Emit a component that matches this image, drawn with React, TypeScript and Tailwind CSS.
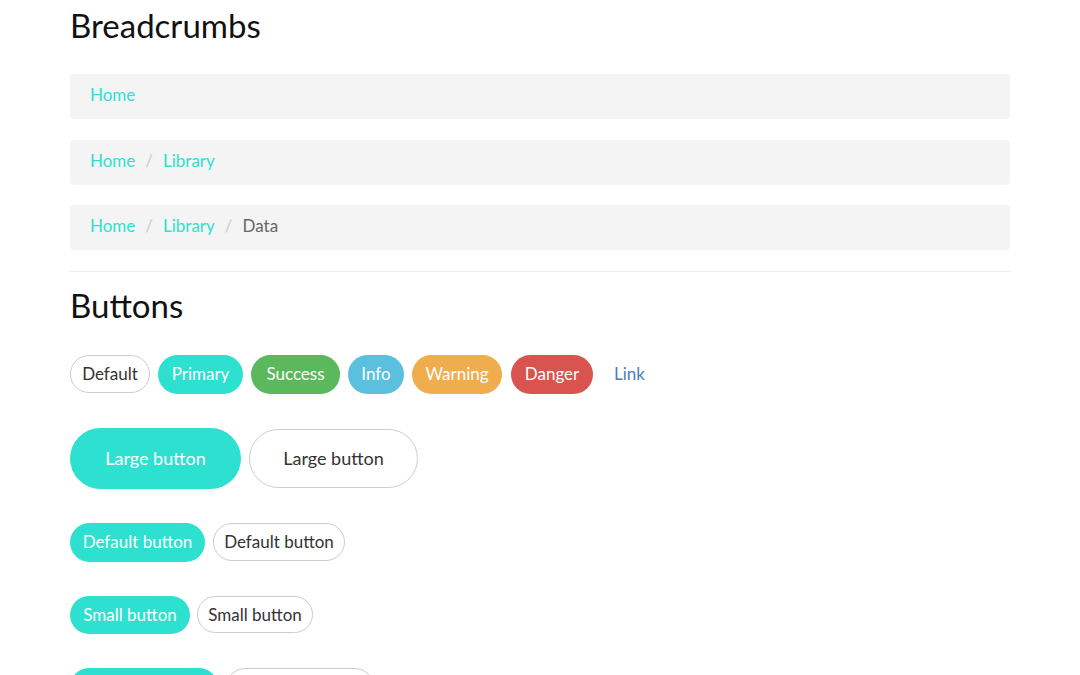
const font = { fontFamily: "Lato, 'Open Sans', sans-serif" };

function Crumbs({ items }: { items: string[] }) {
  return (
    <div className="flex h-[45px] items-center rounded-[4px] bg-[#f4f4f4] px-[20px] pb-[4px] text-[17px]">
      {items.map((item, i) => {
        const last = i === items.length - 1 && items.length > 2;
        return (
          <span key={item} className="flex items-center">
            {i > 0 && <span className="px-[10px] text-[#cccccc]">/</span>}
            <span className={last ? "text-[#666666]" : "text-[#2ee0cf]"}>{item}</span>
          </span>
        );
      })}
    </div>
  );
}

export default function App() {
  return (
    <div className="min-h-[675px] bg-white text-[#333333]" style={font}>
      <div className="mx-auto w-[940px] pt-[7px]">
        {/* Breadcrumbs */}
        <h2 className="mb-[31px] text-[33px] leading-[1.1] font-normal text-[#111111]">Breadcrumbs</h2>
        <div className="flex flex-col gap-[20.5px]">
          <Crumbs items={["Home"]} />
          <Crumbs items={["Home", "Library"]} />
          <Crumbs items={["Home", "Library", "Data"]} />
        </div>
        <hr className="mt-[21px] border-t border-[#eeeeee]" />

        {/* Buttons */}
        <h2 className="mt-[15px] mb-[31px] text-[33px] leading-[1.1] font-normal text-[#111111]">Buttons</h2>
        <div className="flex flex-col gap-[34px] text-[17px]">
          <div className="flex items-center gap-[8px]">
            <button className="h-[38px] w-[80px] rounded-full border border-[#cccccc] bg-white text-[#333333]">Default</button>
            <button className="h-[39px] w-[85px] rounded-full bg-[#2ee0cf] text-white">Primary</button>
            <button className="h-[39px] w-[89px] rounded-full bg-[#5cb85c] text-white">Success</button>
            <button className="h-[39px] w-[56px] rounded-full bg-[#5bc0de] text-white">Info</button>
            <button className="h-[39px] w-[90px] rounded-full bg-[#f0ad4e] text-white">Warning</button>
            <button className="ml-[1px] h-[39px] w-[82px] rounded-full bg-[#d9534f] text-white">Danger</button>
            <button className="h-[39px] w-[57px] rounded-full text-[#4f7db8]">Link</button>
          </div>
          <div className="flex items-center gap-[8px] text-[18px]">
            <button className="h-[61px] w-[171px] rounded-full bg-[#2ee0cf] text-white">Large button</button>
            <button className="h-[59px] w-[169px] rounded-full border border-[#cccccc] bg-white text-[#333333]">Large button</button>
          </div>
          <div className="flex items-center gap-[8px]">
            <button className="h-[39px] w-[135px] rounded-full bg-[#2ee0cf] text-white">Default button</button>
            <button className="h-[38px] w-[132px] rounded-full border border-[#cccccc] bg-white text-[#333333]">Default button</button>
          </div>
          <div className="flex items-center gap-[7px]">
            <button className="h-[38px] w-[120px] rounded-full bg-[#2ee0cf] text-white">Small button</button>
            <button className="h-[37px] w-[116px] rounded-full border border-[#cccccc] bg-white text-[#333333]">Small button</button>
          </div>
          {/* next row, only its top edge shows in the viewport */}
          <div className="flex items-start gap-[8px]">
            <div className="h-[38px] w-[148px] rounded-full bg-[#2ee0cf]" />
            <div className="h-[38px] w-[148px] rounded-full border border-[#cccccc] bg-white" />
          </div>
        </div>
      </div>
    </div>
  );
}
